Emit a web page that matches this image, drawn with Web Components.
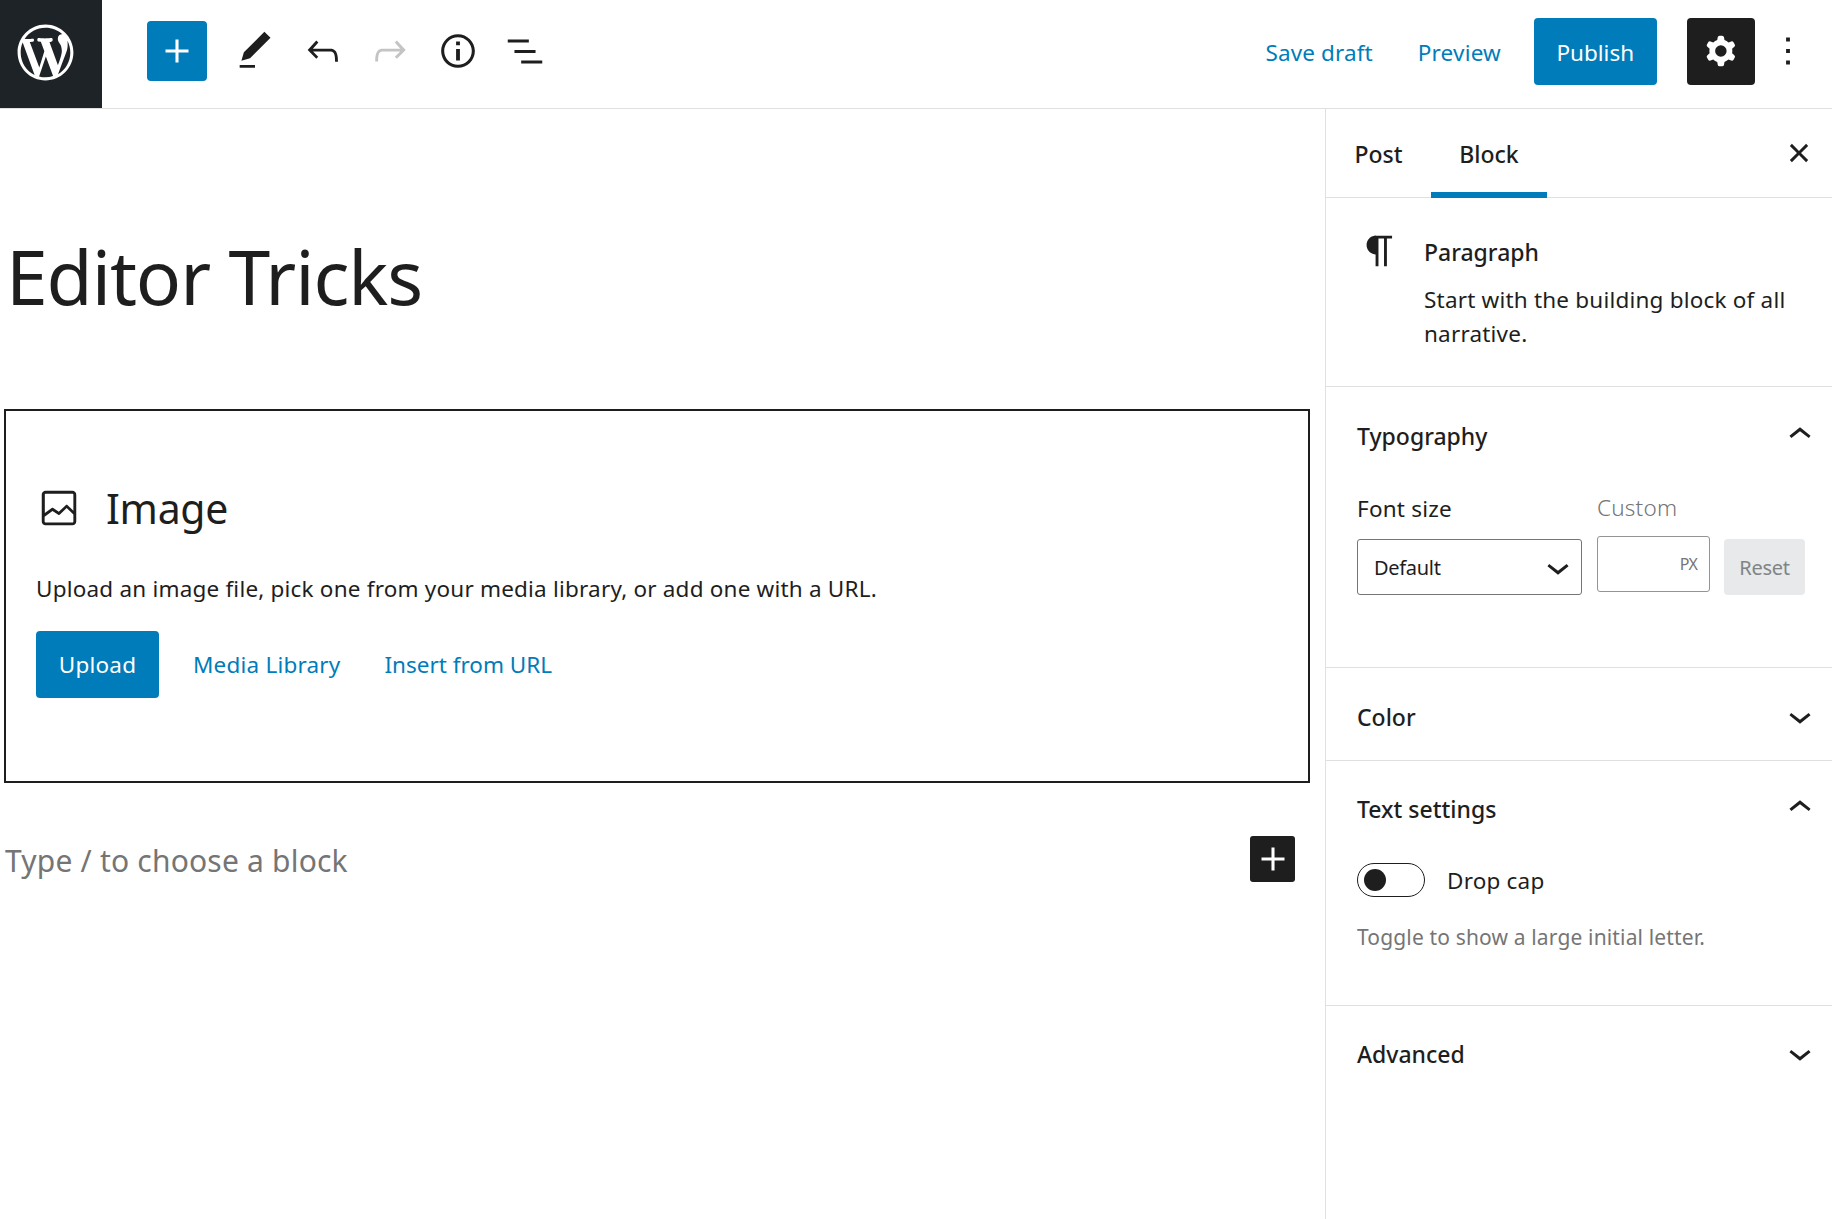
<!DOCTYPE html>
<html lang="en"><head><meta charset="utf-8"><title>Editor Tricks</title>
<style>
html,body{margin:0;padding:0;background:#fff;height:100%;overflow:hidden}
body{font-family:"Noto Sans","Open Sans",sans-serif;color:#1e1e1e}
</style></head><body>
<wp-app>
  <wp-header></wp-header>
  <div slot="main" style="display:flex;flex:1;min-height:0">
    <wp-editor style="flex:1"></wp-editor>
    <wp-sidebar></wp-sidebar>
  </div>
</wp-app>
<script>
const P={
plus:'M18 11.2h-5.2V6h-1.6v5.2H6v1.6h5.2V18h1.6v-5.2H18z',
pencil:'M20.1 5.1L16.9 2 6.2 12.7l-1.3 4.4 4.5-1.3L20.1 5.1zM4 20.8h8v-1.5H4v1.5z',
undo:'M18.3 11.7c-.6-.6-1.4-.9-2.3-.9H6.7l2.9-3.3-1.1-1-4.5 5L8.5 16l1-1-2.7-2.7H16c.5 0 .9.2 1.3.5 1 1 1 3.4 1 4.5v.3h1.5v-.2c0-1.5 0-4.3-1.5-5.7z',
redo:'M15.6 6.5l-1.1 1 2.9 3.3H8c-.9 0-1.7.3-2.3.9-1.4 1.5-1.4 4.2-1.4 5.6v.2h1.5v-.3c0-1.1 0-3.5 1-4.5.3-.3.7-.5 1.3-.5h9.2L14.5 15l1.1 1.1 4.6-4.6-4.6-5z',
info:'M12 3.2c-4.8 0-8.8 3.9-8.8 8.8 0 4.8 3.9 8.8 8.8 8.8 4.8 0 8.8-3.9 8.8-8.8 0-4.8-4-8.8-8.8-8.8zm0 16c-4 0-7.2-3.3-7.2-7.2C4.8 8 8 4.8 12 4.8s7.2 3.3 7.2 7.2c0 4-3.2 7.2-7.2 7.2zM11 17h2v-6h-2v6zm0-8h2V7h-2v2z',
list:'M3 6h11v1.5H3V6zm3.5 5.5h11V13h-11v-1.5zM21 17H10v1.5h11V17z',
cog:'M10.289 4.836A1 1 0 0111.275 4h1.306a1 1 0 01.987.836l.244 1.466c.787.26 1.503.679 2.108 1.218l1.393-.522a1 1 0 011.216.437l.653 1.13a1 1 0 01-.23 1.273l-1.148.944a6.025 6.025 0 010 2.435l1.149.946a1 1 0 01.23 1.272l-.653 1.13a1 1 0 01-1.216.437l-1.394-.522c-.605.54-1.32.958-2.108 1.218l-.244 1.466a1 1 0 01-.987.836h-1.306a1 1 0 01-.986-.836l-.244-1.466a5.995 5.995 0 01-2.108-1.218l-1.394.522a1 1 0 01-1.217-.436l-.653-1.131a1 1 0 01.23-1.272l1.149-.946a6.026 6.026 0 010-2.435l-1.148-.944a1 1 0 01-.23-1.272l.653-1.131a1 1 0 011.217-.437l1.393.522a5.994 5.994 0 012.108-1.218l.244-1.466zM14.929 12a3 3 0 11-6 0 3 3 0 016 0z',
more:'M13 19h-2v-2h2v2zm0-6h-2v-2h2v2zm0-6h-2V5h2v2z',
close:'M12 13.06l3.712 3.713 1.061-1.06L13.061 12l3.712-3.712-1.06-1.06L12 10.938 8.288 7.227l-1.061 1.06L10.939 12l-3.712 3.712 1.06 1.061L12 13.061z',
up:'M6.5 12.4L12 8l5.5 4.4-.9 1.2L12 10l-4.5 3.6-1-1.2z',
down:'M17.5 11.6L12 16l-5.5-4.4.9-1.2L12 14l4.5-3.6 1 1.2z',
para:'M18.3 4H9.9v-.1l-.9.2c-2.3.4-4 2.4-4 4.8s1.7 4.4 4 4.8l.7.1V20h1.5V5.5h2.9V20h1.5V5.5h2.7V4z',
image:'M19 3H5c-1.1 0-2 .9-2 2v14c0 1.1.9 2 2 2h14c1.1 0 2-.9 2-2V5c0-1.1-.9-2-2-2zM5 4.5h14c.3 0 .5.2.5.5v8.4l-3-2.9c-.3-.3-.8-.3-1 0L11.9 14 9 12c-.3-.2-.6-.2-.8 0l-3.6 2.6V5c-.1-.3.1-.5.4-.5zm14 15H5c-.3 0-.5-.2-.5-.5v-2.4l4.1-3 3 1.9c.3.2.7.2.9-.1L16 12l3.5 3.4V19c0 .3-.2.5-.5.5z',
wp:'M20 10c0-5.51-4.49-10-10-10C4.48 0 0 4.49 0 10c0 5.52 4.48 10 10 10 5.51 0 10-4.48 10-10zM7.78 15.37L4.37 6.22c.55-.02 1.17-.08 1.17-.08.5-.06.44-1.13-.06-1.11 0 0-1.45.11-2.37.11-.18 0-.37 0-.58-.01C4.12 2.69 6.87 1.11 10 1.11c2.33 0 4.45.87 6.05 2.34-.68-.11-1.65.39-1.65 1.58 0 .74.45 1.36.9 2.1.35.61.55 1.36.55 2.46 0 1.49-1.4 5-1.4 5l-3.03-8.37c.54-.02.82-.17.82-.17.5-.05.44-1.25-.06-1.22 0 0-1.44.12-2.38.12-.87 0-2.33-.12-2.33-.12-.5-.03-.56 1.2-.06 1.22l.92.08 1.26 3.41zM17.41 10c.24-.64.74-1.87.43-4.25.7 1.29 1.05 2.71 1.05 4.25 0 3.29-1.73 6.24-4.4 7.78.97-2.59 1.94-5.2 2.92-7.78zM6.1 18.09C3.12 16.65 1.11 13.53 1.11 10c0-1.3.23-2.48.72-3.59C3.25 10.3 4.67 14.2 6.1 18.09zm4.03-6.63l2.58 6.98c-.86.29-1.76.45-2.71.45-.79 0-1.57-.11-2.29-.33.81-2.38 1.62-4.74 2.42-7.1z'
};
function def(tag,html){customElements.define(tag,class extends HTMLElement{
  constructor(){super();this.attachShadow({mode:'open'}).innerHTML=typeof html==='function'?html(this):html}
  connectedCallback(){if(typeof html==='function')this.shadowRoot.innerHTML=html(this)}
})}
def('wp-icon',e=>{const n=e.getAttribute('name'),s=e.getAttribute('size')||46,c=e.getAttribute('color')||'currentColor',vb=e.getAttribute('vb')||'0 0 24 24';
return `<style>:host{display:inline-flex;flex:none;width:${s}px;height:${s}px}svg{display:block}</style><svg xmlns="http://www.w3.org/2000/svg" width="${s}" height="${s}" viewBox="${vb}" fill="${c}" fill-rule="evenodd"><path d="${P[n]}"/></svg>`});
def('wp-app',`<style>:host{display:flex;flex-direction:column;height:1219px;width:1832px;overflow:hidden}</style><slot></slot><slot name="main" style="display:flex;flex:1;min-height:0"></slot>`);
def('wp-button',e=>{const k=e.getAttribute('kind')||'link';
return `<style>:host{display:inline-flex;align-items:center;justify-content:center;flex:none;height:67px;box-sizing:border-box;padding-top:var(--pt,0);border-radius:4px;font-size:var(--fs,22.5px);letter-spacing:var(--ls,.2px);white-space:nowrap;cursor:pointer;
${k==='primary'?'background:#007cba;color:#fff;':k==='link'?'color:#007cba;':k==='disabled'?'background:#e7e9ea;color:#7f8487;height:56px;':''}}</style><slot></slot>`});
def('wp-header',`<style>
:host{display:flex;flex:none;height:109px;box-sizing:border-box;border-bottom:1px solid #e0e0e0;background:#fff;color:#1e1e1e}
.logo{width:102px;background:#1e2327;display:flex;align-items:center;justify-content:flex-start;padding:0 0 4px 12px;box-sizing:border-box;color:#fff}
.bar{flex:1;display:flex;align-items:center;padding:0 21px 6px 45px;--pt:2px}
.add{width:60px;height:60px;background:#007cba;color:#fff;border-radius:4px;display:flex;align-items:center;justify-content:center;margin-right:14.5px}
.ib{width:67.5px;display:flex;justify-content:center}
.sp{flex:1}
.set{width:68px;height:67px;background:#1e1e1e;color:#fff;border-radius:4px;display:flex;align-items:center;justify-content:center;margin:0 10px 0 30.5px}
.more{width:46px;display:flex}
</style>
<div class="logo"><wp-icon name="wp" size="67" vb="-2 -2 24 24"></wp-icon></div>
<div class="bar">
<div class="add"><wp-icon name="plus"></wp-icon></div>
<div class="ib"><wp-icon name="pencil"></wp-icon></div>
<div class="ib"><wp-icon name="undo"></wp-icon></div>
<div class="ib" style="color:#c4c4c4"><wp-icon name="redo"></wp-icon></div>
<div class="ib"><wp-icon name="info"></wp-icon></div>
<div class="ib"><wp-icon name="list"></wp-icon></div>
<div class="sp"></div>
<wp-button kind="link" style="margin-right:45px;--ls:.1px">Save draft</wp-button>
<wp-button kind="link" style="margin-right:33px">Preview</wp-button>
<wp-button kind="primary" style="width:122.5px;--ls:0">Publish</wp-button>
<div class="set"><wp-icon name="cog"></wp-icon></div>
<div class="more"><wp-icon name="more"></wp-icon></div>
</div>`);
def('wp-image-block',`<style>
:host{display:block;box-sizing:border-box;height:374px;width:1306px;margin-left:4px;border:2px solid #1e1e1e;padding:74px 30px 0}
.h{display:flex;align-items:center;height:46px;font-size:41px;letter-spacing:-.3px;gap:24px}
.d{font-size:22.5px;letter-spacing:.2px;line-height:30px;margin-top:43px;white-space:nowrap}
.b{display:flex;margin-top:27px;align-items:center}
</style>
<div class="h"><wp-icon name="image"></wp-icon><span>Image</span></div>
<div class="d">Upload an image file, pick one from your media library, or add one with a URL.</div>
<div class="b"><wp-button kind="primary" style="width:123px">Upload</wp-button>
<wp-button kind="link" style="margin-left:34px">Media Library</wp-button>
<wp-button kind="link" style="margin-left:44px;--ls:0">Insert from URL</wp-button></div>`);
def('wp-editor',`<style>
:host{display:block;min-width:0}
.t{font-size:75px;line-height:90px;height:90px;padding-left:6px;margin:122px 0 88px;white-space:nowrap;letter-spacing:-1.1px}
.p{display:flex;align-items:center;justify-content:space-between;height:46px;margin-top:53px;padding:0 30px 0 5px;color:#757575;font-size:30px;letter-spacing:.2px}
.p span{padding-top:2px}
.ins{width:45px;height:46px;border-radius:3px;background:#1e1e1e;color:#fff;display:flex;justify-content:center}
</style>
<div class="t">Editor Tricks</div>
<wp-image-block></wp-image-block>
<div class="p"><span>Type / to choose a block</span><div class="ins"><wp-icon name="plus"></wp-icon></div></div>`);
def('wp-panel',e=>{const o=e.hasAttribute('open');return `<style>
:host{display:block;border-bottom:1px solid #e0e0e0;box-sizing:border-box}
:host([last]){border-bottom:0}
.h{display:flex;align-items:center;justify-content:space-between;height:var(--hh,98px);padding:0 9px 0 31px;font-size:23px;font-weight:500}
wp-icon{margin-bottom:2px}
.b{padding:0 0 0 31px}
</style><div class="h"><span>${e.getAttribute('title')}</span><wp-icon name="${o?'up':'down'}"></wp-icon></div><div class="b"><slot></slot></div>`});
def('wp-font-size',`<style>
:host{display:flex;font-size:22.5px;letter-spacing:.2px}
:host>div{flex:none}
.l{height:46px;line-height:48px}
.sel{box-sizing:border-box;width:225px;height:56px;margin-top:8px;border:1px solid #757575;border-radius:3px;display:flex;align-items:center;justify-content:space-between;padding:0 0 0 16px;font-size:20px;letter-spacing:-.3px}
.c{margin-left:15px;width:113px}
.c .l{color:#757575;font-weight:300;line-height:46px}
.inp{box-sizing:border-box;height:56px;margin-top:5px;border:1px solid #949494;border-radius:3px;display:flex;align-items:center;justify-content:flex-end;padding:0 12px 0 0;font-size:16px;color:#757575;letter-spacing:-.8px}
.r{margin:54px 0 0 14px}
</style>
<div><div class="l">Font size</div><div class="sel"><span>Default</span><wp-icon name="down"></wp-icon></div></div>
<div class="c"><div class="l">Custom</div><div class="inp">PX</div></div>
<div class="r"><wp-button kind="disabled" style="width:81px;--fs:20px;--ls:-.3px">Reset</wp-button></div>`);
def('wp-toggle',`<style>
:host{display:block;padding-top:6px;font-size:22.5px;letter-spacing:.2px}
.row{display:flex;align-items:center;height:34px}
.tr{box-sizing:border-box;width:68px;height:34px;border:1px solid #1e1e1e;border-radius:17px;display:flex;align-items:center;padding-left:6px;margin-right:22px}
.k{width:22px;height:22px;border-radius:50%;background:#1e1e1e}
.hp{color:#757575;height:34px;line-height:34px;margin-top:23px;font-size:21px;letter-spacing:.15px;white-space:nowrap}
</style>
<div class="row"><div class="tr"><div class="k"></div></div><span>Drop cap</span></div>
<div class="hp">Toggle to show a large initial letter.</div>`);
def('wp-sidebar',`<style>
:host{display:block;flex:none;width:507px;box-sizing:border-box;border-left:1px solid #e0e0e0;height:100%;overflow:hidden}
.tabs{display:flex;align-items:stretch;height:89px;box-sizing:border-box;border-bottom:1px solid #e0e0e0;font-size:23px;font-weight:500}
.tab{display:flex;align-items:center;justify-content:center;box-sizing:border-box;width:105px;padding-top:2px}
.tab.a{width:116px;border-bottom:6px solid #007cba;padding-top:7px;margin-bottom:-1px;height:89px}
.x{margin-left:auto;padding-right:10px;display:flex;align-items:center}
.card{display:flex;gap:21px;height:189px;box-sizing:border-box;padding:30px 30px 0 31px;border-bottom:1px solid #e0e0e0}
.ct{font-size:23px;font-weight:500;line-height:34px;margin-top:7px}
.cd{font-size:22.5px;letter-spacing:.2px;line-height:34px;margin-top:14px}
</style>
<div class="tabs"><div class="tab">Post</div><div class="tab a">Block</div><div class="x"><wp-icon name="close"></wp-icon></div></div>
<div class="card"><wp-icon name="para"></wp-icon><div><div class="ct">Paragraph</div><div class="cd">Start with the building block of all narrative.</div></div></div>
<wp-panel title="Typography" open style="height:281px"><wp-font-size></wp-font-size></wp-panel>
<wp-panel title="Color" style="height:93px"></wp-panel>
<wp-panel title="Text settings" open style="height:245px;--hh:96px"><wp-toggle></wp-toggle></wp-panel>
<wp-panel title="Advanced" last style="--hh:96px"></wp-panel>`);
</script>
</body></html>
